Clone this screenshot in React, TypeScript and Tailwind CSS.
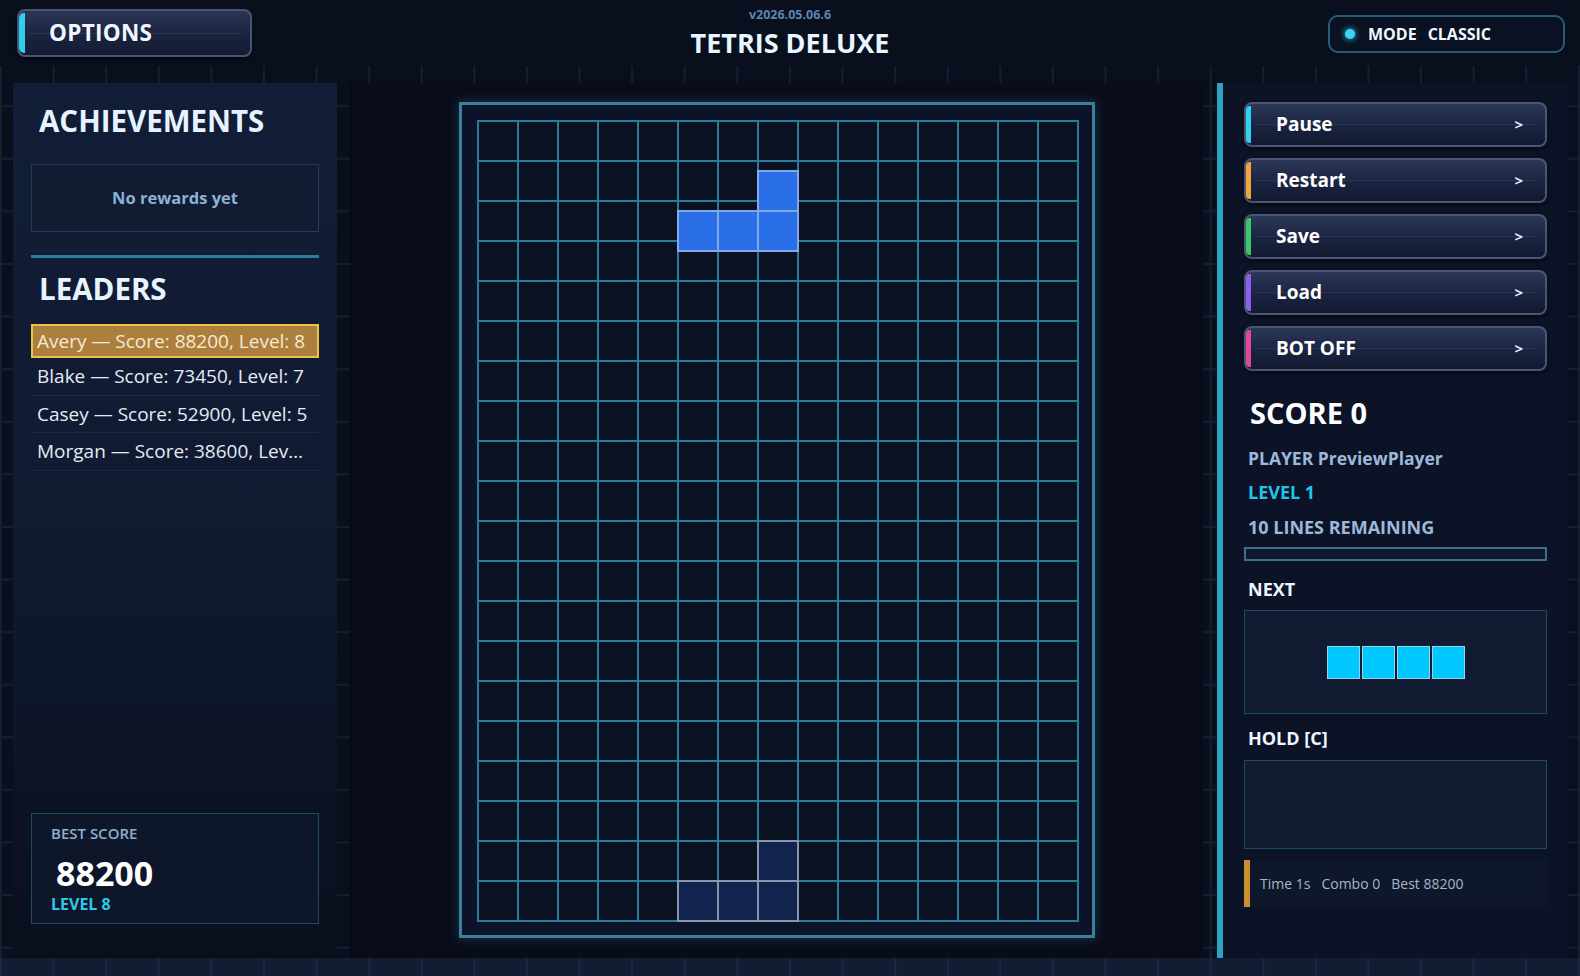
import React from "react";

const gridBg =
  "bg-[linear-gradient(to_right,#161e30_2px,transparent_2px),linear-gradient(to_bottom,#161e30_2px,transparent_2px)] bg-[size:52.6px_52.6px]";

type Btn = { label: string; accent: string };
const buttons: Btn[] = [
  { label: "Pause", accent: "bg-[#2fd3f0]" },
  { label: "Restart", accent: "bg-[#f3a43a]" },
  { label: "Save", accent: "bg-[#37c967]" },
  { label: "Load", accent: "bg-[#8d5cf0]" },
  { label: "BOT OFF", accent: "bg-[#e2479a]" },
];

const leaders = [
  "Blake — Score: 73450, Level: 7",
  "Casey — Score: 52900, Level: 5",
  "Morgan — Score: 38600, Level: 4",
];

function ActionButton({ label, accent }: Btn) {
  return (
    <button className="relative h-[45px] w-full rounded-[8px] border-2 border-[#4b5672] bg-[linear-gradient(to_bottom,#2d3858,#1a2340_55%,#121a31)] shadow-[0_2px_4px_rgba(0,0,0,0.5)] flex items-center pl-[30px] pr-[22px] text-left">
      <span className={`absolute left-0 top-[2px] bottom-[2px] w-[5px] rounded-l-[4px] ${accent}`} />
      <span className="absolute left-[8px] right-[8px] top-[20px] h-px bg-[#28344f]" />
      <span className="relative flex-1 text-[19px] font-bold text-white leading-none">{label}</span>
      <span className="relative text-[15px] font-bold text-[#e6eef8] leading-none">&gt;</span>
    </button>
  );
}

function Board() {
  const cells = Array.from({ length: 300 });
  return (
    <div className="relative h-[836px] w-[636px] border-[3px] border-[#3b7f9c] bg-[#0c1328] p-[15px] shadow-[0_0_10px_rgba(59,140,180,0.35)]">
      <div className="relative grid grid-cols-[repeat(15,38px)] grid-rows-[repeat(20,38px)] gap-[2px] bg-[#2a7a9a] p-[2px] w-[602px] h-[802px]">
        {cells.map((_, i) => (
          <div key={i} className="bg-[#0a1120]" />
        ))}
        {[
          [18, 7],
          [19, 5],
          [19, 6],
          [19, 7],
        ].map(([r, c], i) => (
          <div
            key={"g" + i}
            className="absolute h-[42px] w-[42px] border-2 border-[#a8b2c4]/80 bg-[#11244d]"
            style={{ left: c * 40, top: r * 40 }}
          />
        ))}
        {[
          [50, 7],
          [90, 5],
          [90, 6],
          [90, 7],
        ].map(([t, c], i) => (
          <div
            key={"p" + i}
            className="absolute h-[42px] w-[42px] border-2 border-[#a9c0e6]/70 bg-[#2a6fe8]"
            style={{ left: c * 40, top: t }}
          />
        ))}
      </div>
    </div>
  );
}

export default function App() {
  return (
    <div
      className={`relative flex h-[976px] w-[1580px] flex-col overflow-hidden bg-[#0a0f1d] ${gridBg} font-['Open_Sans','Noto_Sans',sans-serif]`}
    >
      <header className="grid h-[66px] shrink-0 grid-cols-[1fr_auto_1fr] bg-[#0a0f1e]">
        <div className="pl-[17px] pt-[9px]">
          <button className="relative flex h-[48px] w-[235px] items-center rounded-[8px] border-2 border-[#4a5470] bg-[linear-gradient(to_bottom,#2c3654,#1a2340_55%,#141c33)] pl-[30px] shadow-[0_2px_4px_rgba(0,0,0,0.5)]">
            <span className="absolute left-0 top-[2px] bottom-[2px] w-[6px] rounded-l-[5px] bg-[#2fd0ee]" />
            <span className="absolute left-[8px] right-[8px] top-[22px] h-px bg-[#28344f]" />
            <span className="relative text-[22.5px] font-bold leading-none tracking-[0.3px] text-[#f2f8ff]">OPTIONS</span>
          </button>
        </div>
        <div className="flex flex-col items-center pt-[7px]">
          <div className="text-[12.5px] font-bold leading-[16px] text-[#5c86b2]">v2026.05.06.6</div>
          <div className="mt-[3px] text-[27px] font-bold leading-[34px] text-[#e8f6ff]">TETRIS DELUXE</div>
        </div>
        <div className="flex justify-end pr-[15px] pt-[15px]">
          <div className="flex h-[38px] w-[237px] items-center rounded-[10px] border-2 border-[#245f7a] bg-[#0a1122] pl-[15px]">
            <span className="h-[10px] w-[10px] rounded-full bg-[#3bd5f5] shadow-[0_0_6px_#3bd5f5]" />
            <span className="ml-[13px] text-[16px] font-bold leading-none text-[#f2f8ff]">MODE</span>
            <span className="ml-[11px] text-[16px] font-bold leading-none text-[#f2f8ff]">CLASSIC</span>
          </div>
        </div>
      </header>

      <main className="flex h-[892px] shrink-0 gap-[13px] px-[13px] pt-[17px]">
        <aside className="flex w-[324px] shrink-0 flex-col bg-[linear-gradient(to_bottom,#121d37,#101a31_50%,#0a0f1c)] px-[18px] pt-[19px] pb-[34px]">
          <h2 className="ml-[8px] text-[29.5px] font-bold leading-[38px] text-[#e6f4ff]">ACHIEVEMENTS</h2>
          <div className="mt-[24px] flex h-[68px] items-center justify-center border border-[#1f3d56] bg-[#111c33]">
            <span className="text-[16.5px] font-bold text-[#8cb2d6]">No rewards yet</span>
          </div>
          <div className="mt-[23px] h-[3px] bg-[#2a7d9a]" />
          <h2 className="ml-[8px] mt-[12px] text-[29.5px] font-bold leading-[38px] text-[#e6f4ff]">LEADERS</h2>
          <div className="mt-[16px] flex h-[34px] items-center border-2 border-[#e9c545] bg-[#ad7f3f] px-[4px]">
            <span className="whitespace-nowrap overflow-hidden text-ellipsis text-[19px] leading-[24px] text-[#f6ead2]">Avery — Score: 88200, Level: 8</span>
          </div>
          {leaders.map((l) => (
            <div key={l} className="flex h-[37.5px] items-center border-b border-[#1f2a40] px-[6px]">
              <span className="whitespace-nowrap overflow-hidden text-ellipsis text-[19px] leading-[24px] text-[#e4ebf4]">{l}</span>
            </div>
          ))}
          <div className="flex-1" />
          <div className="h-[111px] border border-[#1f4a62] bg-[#0e1629] pl-[19px] pt-[9px]">
            <div className="text-[15px] font-semibold leading-[20px] text-[#8db0d0]">BEST SCORE</div>
            <div className="mt-[12px] pl-[5px] text-[34px] font-bold leading-[36px] text-white">88200</div>
            <div className="mt-[3px] text-[16px] font-bold leading-[20px] text-[#2ec8e8]">LEVEL 8</div>
          </div>
        </aside>

        <section className="flex w-[853px] shrink-0 justify-center border-l border-[#04060c] bg-[#090d19] pt-[19px]">
          <Board />
        </section>

        <aside className="ml-[1px] flex w-[350px] shrink-0 bg-[#0c1326]">
          <div className="w-[6px] shrink-0 bg-[#2ea3c0]" />
          <div className="flex flex-1 flex-col pl-[21px] pr-[20px] pt-[19px]">
            <div className="flex flex-col gap-[11px]">
              {buttons.map((b) => (
                <ActionButton key={b.label} {...b} />
              ))}
            </div>
            <div className="ml-[6px] mt-[24px] text-[29px] font-bold leading-[36px] text-white">SCORE 0</div>
            <div className="ml-[4px] mt-[15px] text-[17.5px] font-bold leading-[24px] text-[#9cb8da]">PLAYER PreviewPlayer</div>
            <div className="ml-[4px] mt-[10px] text-[18px] font-bold leading-[24px] text-[#22c4e8]">LEVEL 1</div>
            <div className="ml-[4px] mt-[11px] text-[18px] font-bold leading-[24px] text-[#9cb8da]">10 LINES REMAINING</div>
            <div className="mt-[8px] h-[14px] border-2 border-[#3f6f8a] bg-[#0f1a30]" />
            <div className="ml-[4px] mt-[16px] text-[18px] font-bold leading-[24px] text-[#eef6ff]">NEXT</div>
            <div className="mt-[9px] flex h-[104px] items-center justify-center border border-[#1f4a66] bg-[#111c33]">
              <div className="flex gap-[2px]">
                {[0, 1, 2, 3].map((i) => (
                  <div key={i} className="h-[33px] w-[33px] border border-[#8fd6ef] bg-[#00c8ff]" />
                ))}
              </div>
            </div>
            <div className="ml-[4px] mt-[12px] text-[18px] font-bold leading-[24px] text-[#eef6ff]">HOLD [C]</div>
            <div className="mt-[10px] h-[89px] border border-[#1f4a66] bg-[#111c33]" />
            <div className="mt-[11px] flex h-[47px] items-center gap-[11px] border-l-[6px] border-[#c8902e] bg-[#0f172a] pl-[10px]">
              <span className="text-[14px] text-[#a3b8d0]">Time 1s</span>
              <span className="text-[14px] text-[#a3b8d0]">Combo 0</span>
              <span className="text-[14px] text-[#a3b8d0]">Best 88200</span>
            </div>
          </div>
        </aside>
      </main>

      <div className="h-[18px] shrink-0 bg-[#131c33] bg-[linear-gradient(to_right,#1d2640_2px,transparent_2px)] bg-[size:52.6px_52.6px]" />
    </div>
  );
}
